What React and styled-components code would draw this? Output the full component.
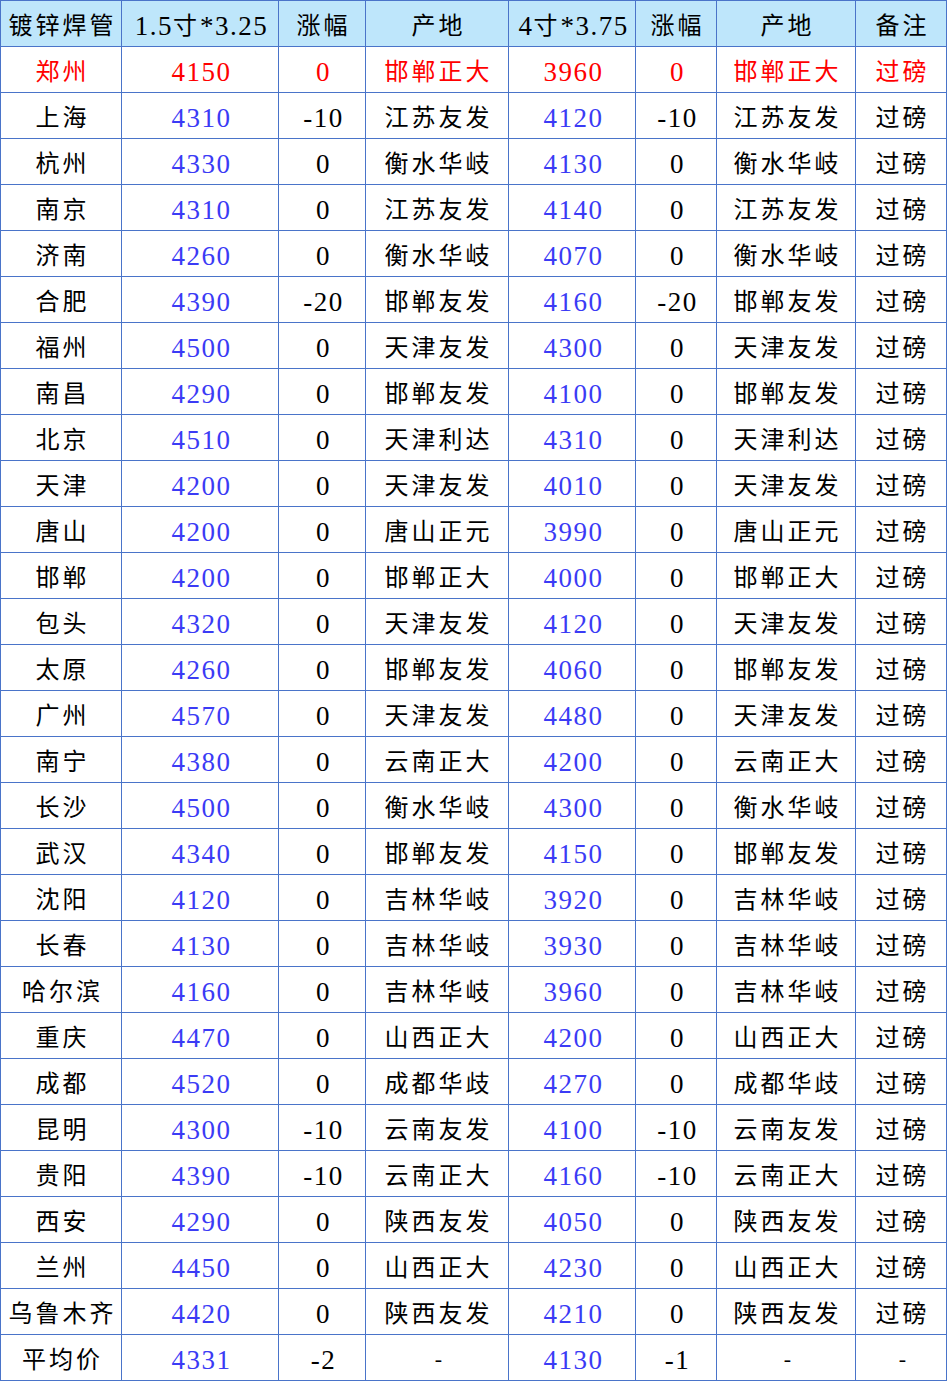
import React from 'react'
import styled, { createGlobalStyle } from 'styled-components'

const GlobalStyle = createGlobalStyle`
  html, body {
    margin: 0;
    padding: 0;
    background: #ffffff;
  }
`

const COLS = '121px 157px 87px 143px 127px 81px 139px 91px'

const headers = ['镀锌焊管', '1.5寸*3.25', '涨幅', '产地', '4寸*3.75', '涨幅', '产地', '备注']

const rows = [
  ['郑州', '4150', '0', '邯郸正大', '3960', '0', '邯郸正大', '过磅'],
  ['上海', '4310', '-10', '江苏友发', '4120', '-10', '江苏友发', '过磅'],
  ['杭州', '4330', '0', '衡水华岐', '4130', '0', '衡水华岐', '过磅'],
  ['南京', '4310', '0', '江苏友发', '4140', '0', '江苏友发', '过磅'],
  ['济南', '4260', '0', '衡水华岐', '4070', '0', '衡水华岐', '过磅'],
  ['合肥', '4390', '-20', '邯郸友发', '4160', '-20', '邯郸友发', '过磅'],
  ['福州', '4500', '0', '天津友发', '4300', '0', '天津友发', '过磅'],
  ['南昌', '4290', '0', '邯郸友发', '4100', '0', '邯郸友发', '过磅'],
  ['北京', '4510', '0', '天津利达', '4310', '0', '天津利达', '过磅'],
  ['天津', '4200', '0', '天津友发', '4010', '0', '天津友发', '过磅'],
  ['唐山', '4200', '0', '唐山正元', '3990', '0', '唐山正元', '过磅'],
  ['邯郸', '4200', '0', '邯郸正大', '4000', '0', '邯郸正大', '过磅'],
  ['包头', '4320', '0', '天津友发', '4120', '0', '天津友发', '过磅'],
  ['太原', '4260', '0', '邯郸友发', '4060', '0', '邯郸友发', '过磅'],
  ['广州', '4570', '0', '天津友发', '4480', '0', '天津友发', '过磅'],
  ['南宁', '4380', '0', '云南正大', '4200', '0', '云南正大', '过磅'],
  ['长沙', '4500', '0', '衡水华岐', '4300', '0', '衡水华岐', '过磅'],
  ['武汉', '4340', '0', '邯郸友发', '4150', '0', '邯郸友发', '过磅'],
  ['沈阳', '4120', '0', '吉林华岐', '3920', '0', '吉林华岐', '过磅'],
  ['长春', '4130', '0', '吉林华岐', '3930', '0', '吉林华岐', '过磅'],
  ['哈尔滨', '4160', '0', '吉林华岐', '3960', '0', '吉林华岐', '过磅'],
  ['重庆', '4470', '0', '山西正大', '4200', '0', '山西正大', '过磅'],
  ['成都', '4520', '0', '成都华歧', '4270', '0', '成都华歧', '过磅'],
  ['昆明', '4300', '-10', '云南友发', '4100', '-10', '云南友发', '过磅'],
  ['贵阳', '4390', '-10', '云南正大', '4160', '-10', '云南正大', '过磅'],
  ['西安', '4290', '0', '陕西友发', '4050', '0', '陕西友发', '过磅'],
  ['兰州', '4450', '0', '山西正大', '4230', '0', '山西正大', '过磅'],
  ['乌鲁木齐', '4420', '0', '陕西友发', '4210', '0', '陕西友发', '过磅'],
  ['平均价', '4331', '-2', '-', '4130', '-1', '-', '-'],
]

// price columns are blue, everything else black; first data row is red
const priceCols = [1, 4]

// split a label into latin / CJK runs so digits can be sized separately
function Label({ text }) {
  const parts = text.match(/[\x00-\x7f]+|[^\x00-\x7f]+/g) || []
  return parts.map((p, i) =>
    /^[\x00-\x7f]+$/.test(p) ? <Latin key={i}>{p}</Latin> : <span key={i}>{p}</span>
  )
}

function PriceTable() {
  return (
    <Grid>
      {headers.map((h, i) => (
        <HeadCell key={'h' + i}>
          <Label text={h} />
        </HeadCell>
      ))}
      {rows.map((r, ri) =>
        r.map((v, ci) => (
          <Cell
            key={ri + '-' + ci}
            $tone={ri === 0 ? 'red' : priceCols.includes(ci) ? 'blue' : 'black'}
          >
            {v === '-' ? <Dash>-</Dash> : <Label text={v} />}
          </Cell>
        ))
      )}
    </Grid>
  )
}

export default function App() {
  return (
    <>
      <GlobalStyle />
      <PriceTable />
    </>
  )
}

const Grid = styled.div`
  display: grid;
  grid-template-columns: ${COLS};
  grid-auto-rows: 46px;
  width: 947px;
  box-sizing: border-box;
  border-top: 1px solid #4a74c9;
  border-left: 1px solid #4a74c9;
  font-family: "Liberation Serif", "Noto Sans CJK SC", serif;
  font-size: 24px;
  letter-spacing: 3px;
`

const BaseCell = styled.div`
  display: flex;
  align-items: center;
  justify-content: center;
  box-sizing: border-box;
  border-right: 1px solid #4a74c9;
  border-bottom: 1px solid #4a74c9;
  white-space: nowrap;
  overflow: hidden;
  padding-left: 3px;
`

const HeadCell = styled(BaseCell)`
  background: #bee6fb;
  color: #000000;
`

const toneColor = {
  red: '#ff0000',
  blue: '#3b3bf5',
  black: '#000000',
}

const Cell = styled(BaseCell)`
  background: #ffffff;
  color: ${(p) => toneColor[p.$tone]};
`

const Latin = styled.span`
  font-size: 27px;
  letter-spacing: 1.5px;
  line-height: 1;
  padding-top: 5px;
`

const Dash = styled.span`
  font-size: 22px;
  letter-spacing: 0;
  padding-top: 2px;
`
